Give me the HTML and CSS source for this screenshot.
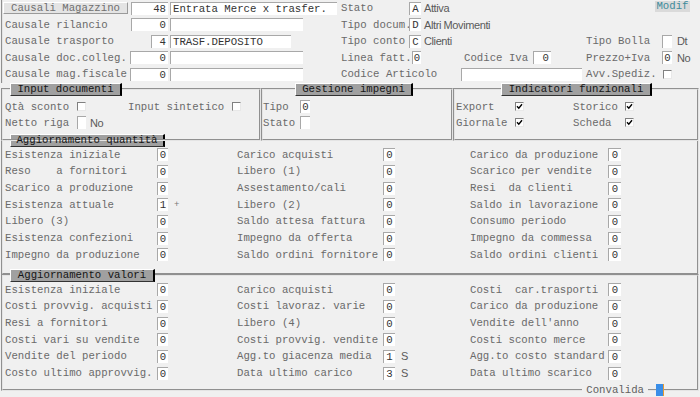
FILE: index.html
```html
<!DOCTYPE html>
<html lang="it">
<head>
    <meta charset="UTF-8">
    <title>Causali Magazzino</title>
    <link rel="stylesheet" href="styles.css">
</head>
<body>
<div class="window">
    <!-- Testata causale -->
    <div class="head">
        <div class="row">
            <span class="btn-light w125">Causali Magazzino</span>
            <span class="fld num ml3 w37">48</span>
            <span class="fld ml2 w167">Entrata Merce x trasfer.</span>
            <span class="lbl ml4 w68">Stato</span>
            <span class="fld sm w12">A</span>
            <span class="sans ml3">Attiva</span>
            <span class="modif">Modif</span>
        </div>
        <div class="row">
            <span class="lbl ml2 w126">Causale rilancio</span>
            <span class="fld num w37">0</span>
            <span class="fld ml2 w133"></span>
            <span class="lbl ml38 w68">Tipo docum.</span>
            <span class="fld sm w12">D</span>
            <span class="sans ml3">Altri Movimenti</span>
        </div>
        <div class="row">
            <span class="lbl ml2 w146">Causale trasporto</span>
            <span class="fld num w17">4</span>
            <span class="fld ml2 w121">TRASF.DEPOSITO</span>
            <span class="lbl ml50 w68">Tipo conto</span>
            <span class="fld sm w12">C</span>
            <span class="sans ml3 w162">Clienti</span>
            <span class="lbl w76">Tipo Bolla</span>
            <span class="fld sm w10"></span>
            <span class="sans ml5">Dt</span>
        </div>
        <div class="row">
            <span class="lbl ml2 w125">Causale doc.colleg.</span>
            <span class="fld num w38">0</span>
            <span class="fld ml2 w133"></span>
            <span class="lbl ml38 w71">Linea fatt.</span>
            <span class="fld sm w9">0</span>
            <span class="lbl ml43 w69">Codice Iva</span>
            <span class="fld num w18">0</span>
            <span class="lbl ml35 w76">Prezzo+Iva</span>
            <span class="fld sm w10">0</span>
            <span class="sans ml5">No</span>
        </div>
        <div class="row">
            <span class="lbl ml2 w125">Causale mag.fiscale</span>
            <span class="fld num w38">0</span>
            <span class="fld ml2 w133"></span>
            <span class="lbl ml38 w120">Codice Articolo</span>
            <span class="fld w121"></span>
            <span class="lbl ml4 w77">Avv.Spediz.</span>
            <span class="chk"></span>
        </div>
    </div>

    <!-- Gruppi -->
    <div class="groups">
        <fieldset class="group g1">
            <legend class="ml7"><span class="title w112">Input documenti</span></legend>
            <div class="grow">
                <span class="lbl ml2 w72">Qtà sconto</span>
                <span class="chk"></span>
                <span class="lbl ml42 w104">Input sintetico</span>
                <span class="chk"></span>
            </div>
            <div class="grow">
                <span class="lbl ml2 w72">Netto riga</span>
                <span class="fld sm w9"></span>
                <span class="sans ml4">No</span>
            </div>
        </fieldset>
        <fieldset class="group g2">
            <legend class="ml32"><span class="title w118">Gestione impegni</span></legend>
            <div class="grow">
                <span class="lbl w37">Tipo</span>
                <span class="fld sm w10">0</span>
            </div>
            <div class="grow">
                <span class="lbl w37">Stato</span>
                <span class="fld sm w10"></span>
            </div>
        </fieldset>
        <fieldset class="group g3">
            <legend class="ml46"><span class="title w151">Indicatori funzionali</span></legend>
            <div class="grow">
                <span class="lbl ml1 w59">Export</span>
                <span class="chk on"><svg viewBox="0 0 7 7"><path d="M1 3.2 L2.8 5.2 L6 1.2"/></svg></span>
                <span class="lbl ml49 w52">Storico</span>
                <span class="chk on"><svg viewBox="0 0 7 7"><path d="M1 3.2 L2.8 5.2 L6 1.2"/></svg></span>
            </div>
            <div class="grow">
                <span class="lbl ml1 w59">Giornale</span>
                <span class="chk on"><svg viewBox="0 0 7 7"><path d="M1 3.2 L2.8 5.2 L6 1.2"/></svg></span>
                <span class="lbl ml49 w52">Scheda</span>
                <span class="chk on"><svg viewBox="0 0 7 7"><path d="M1 3.2 L2.8 5.2 L6 1.2"/></svg></span>
            </div>
        </fieldset>
    </div>

    <!-- Aggiornamento quantità -->
    <fieldset class="section qty">
        <legend class="ml7"><span class="title w155">Aggiornamento quantità</span></legend>
        <div class="grid">
            <span class="lbl">Esistenza iniziale</span><span class="fld">0</span><span></span>
            <span class="lbl">Carico acquisti</span><span class="fld">0</span><span></span>
            <span class="lbl">Carico da produzione</span><span class="fld">0</span>

            <span class="lbl">Reso    a fornitori</span><span class="fld">0</span><span></span>
            <span class="lbl">Libero (1)</span><span class="fld">0</span><span></span>
            <span class="lbl">Scarico per vendite</span><span class="fld">0</span>

            <span class="lbl">Scarico a produzione</span><span class="fld">0</span><span></span>
            <span class="lbl">Assestamento/cali</span><span class="fld">0</span><span></span>
            <span class="lbl">Resi  da clienti</span><span class="fld">0</span>

            <span class="lbl">Esistenza attuale</span><span class="fld">1</span><span class="extra plus">+</span>
            <span class="lbl">Libero (2)</span><span class="fld">0</span><span></span>
            <span class="lbl">Saldo in lavorazione</span><span class="fld">0</span>

            <span class="lbl">Libero (3)</span><span class="fld">0</span><span></span>
            <span class="lbl">Saldo attesa fattura</span><span class="fld">0</span><span></span>
            <span class="lbl">Consumo periodo</span><span class="fld">0</span>

            <span class="lbl">Esistenza confezioni</span><span class="fld">0</span><span></span>
            <span class="lbl">Impegno da offerta</span><span class="fld">0</span><span></span>
            <span class="lbl">Impegno da commessa</span><span class="fld">0</span>

            <span class="lbl">Impegno da produzione</span><span class="fld">0</span><span></span>
            <span class="lbl">Saldo ordini fornitore</span><span class="fld">0</span><span></span>
            <span class="lbl">Saldo ordini clienti</span><span class="fld">0</span>
        </div>
    </fieldset>

    <!-- Aggiornamento valori -->
    <fieldset class="section val">
        <legend class="ml7"><span class="title w145">Aggiornamento valori</span></legend>
        <div class="grid">
            <span class="lbl">Esistenza iniziale</span><span class="fld">0</span><span></span>
            <span class="lbl">Carico acquisti</span><span class="fld">0</span><span></span>
            <span class="lbl">Costi  car.trasporti</span><span class="fld">0</span>

            <span class="lbl">Costi provvig. acquisti</span><span class="fld">0</span><span></span>
            <span class="lbl">Costi lavoraz. varie</span><span class="fld">0</span><span></span>
            <span class="lbl">Carico da produzione</span><span class="fld">0</span>

            <span class="lbl">Resi a fornitori</span><span class="fld">0</span><span></span>
            <span class="lbl">Libero (4)</span><span class="fld">0</span><span></span>
            <span class="lbl">Vendite dell'anno</span><span class="fld">0</span>

            <span class="lbl">Costi vari su vendite</span><span class="fld">0</span><span></span>
            <span class="lbl">Costi provvig. vendite</span><span class="fld">0</span><span></span>
            <span class="lbl">Costi sconto merce</span><span class="fld">0</span>

            <span class="lbl">Vendite del periodo</span><span class="fld">0</span><span></span>
            <span class="lbl">Agg.to giacenza media</span><span class="fld">1</span><span class="extra sans">S</span>
            <span class="lbl">Agg.to costo standard</span><span class="fld">0</span>

            <span class="lbl">Costo ultimo approvvig.</span><span class="fld">0</span><span></span>
            <span class="lbl">Data ultimo carico</span><span class="fld">3</span><span class="extra sans">S</span>
            <span class="lbl">Data ultimo scarico</span><span class="fld">0</span>
        </div>
        <div class="foot">
            <span class="foot-label">Convalida</span>
            <span class="focus-box"></span>
        </div>
    </fieldset>
</div>
</body>
</html>
```

FILE: styles.css
```css
:root {
    --bg: #f0f0f0;
    --label: #6a6a6a;
    --value: #333333;
    --field-edge: #a8a8a8;
    --title-bg: #a0a0a0;
}

* {
    margin: 0;
    padding: 0;
    box-sizing: border-box;
}

body {
    background: var(--bg);
    font-family: "Liberation Mono", "Courier New", monospace;
    font-size: 10.7px;
    color: var(--label);
}

.window {
    width: 700px;
    height: 397px;
    overflow: hidden;
}

/* Testata */
.head {
    margin-left: 1px;
    border-left: 2px groove #e4e4e4;
}

.row {
    display: flex;
    align-items: center;
    height: 16.5px;
}

.lbl {
    flex: none;
    white-space: pre;
    color: var(--label);
}

.sans {
    flex: none;
    font-family: "Liberation Sans", Arial, sans-serif;
    font-size: 11px;
    letter-spacing: -0.4px;
    color: #5a5a5a;
}

.fld {
    flex: none;
    display: block;
    height: 13px;
    line-height: 12px;
    padding: 0 2px;
    background: #fff;
    border-top: 1px solid var(--field-edge);
    border-left: 1px solid var(--field-edge);
    color: var(--value);
    white-space: pre;
    overflow: hidden;
}

.fld.num {
    text-align: right;
}

.fld.sm {
    padding: 0;
    text-align: center;
}

.chk {
    flex: none;
    display: block;
    width: 9px;
    height: 9px;
    background: #fff;
    border-top: 1px solid #808080;
    border-left: 1px solid #808080;
    border-right: 1px solid #e8e8e8;
    border-bottom: 1px solid #e8e8e8;
}

.chk svg {
    display: block;
    width: 7px;
    height: 7px;
    fill: none;
    stroke: #000;
    stroke-width: 1.4;
}

.btn-light {
    flex: none;
    display: block;
    height: 12px;
    line-height: 10px;
    text-align: center;
    background: #e4e4e4;
    border-top: 1px solid #fff;
    border-left: 1px solid #fff;
    border-right: 1px solid #9a9a9a;
    border-bottom: 1px solid #9a9a9a;
    color: #707070;
}

.modif {
    flex: none;
    margin-left: auto;
    margin-right: 10px;
    width: 35px;
    height: 11px;
    line-height: 11px;
    text-align: center;
    background: #dadada;
    color: #3f8c9c;
    align-self: flex-start;
    margin-top: 1px;
}

/* Riquadri */
fieldset {
    border: 2px groove #e4e4e4;
    min-inline-size: 0;
}

legend {
    padding: 0;
    text-align: left;
}

.title {
    display: block;
    height: 13px;
    line-height: 11px;
    text-align: center;
    background: var(--title-bg);
    color: #151515;
    border-top: 1px solid #fff;
    border-left: 1px solid #fff;
    border-right: 2px solid #000;
    border-bottom: 1px solid #333;
    white-space: pre;
}

.groups {
    display: flex;
    margin-left: 1px;
}

.group {
    height: 58px;
    padding-top: 3px;
}

.g1 { width: 260px; }
.g2 { width: 192px; }
.g3 { width: 246px; }

.grow {
    display: flex;
    align-items: center;
    height: 16px;
}

.section {
    margin-left: 1px;
    width: 698px;
}

.qty {
    margin-top: -7px;
    height: 141px;
}

.val {
    margin-top: -6px;
    height: 122px;
}

.grid {
    display: grid;
    grid-template-columns: 152px 11px 69px 146px 12px 75px 138px 13px;
    grid-auto-rows: 16.67px;
    align-items: center;
    padding-left: 2px;
}

.grid .fld {
    padding: 0;
    text-align: center;
}

.extra {
    padding-left: 6px;
}

.plus {
    font-size: 9px;
    color: #777;
}

.foot {
    display: flex;
    align-items: center;
    justify-content: flex-end;
    height: 14px;
    margin-top: 2px;
    margin-right: 33px;
}

.foot-label {
    background: var(--bg);
    padding: 0 4px;
    color: #606060;
}

.focus-box {
    width: 8px;
    height: 12px;
    margin-left: 8px;
    background: #3a8ee8;
    border-right: 1px solid #e89a30;
}

/* spaziature */
.ml1 { margin-left: 1px; }
.ml2 { margin-left: 2px; }
.ml3 { margin-left: 3px; }
.ml4 { margin-left: 4px; }
.ml5 { margin-left: 5px; }
.ml7 { margin-left: 7px; }
.ml32 { margin-left: 32px; }
.ml35 { margin-left: 35px; }
.ml38 { margin-left: 38px; }
.ml42 { margin-left: 42px; }
.ml43 { margin-left: 43px; }
.ml46 { margin-left: 46px; }
.ml49 { margin-left: 49px; }
.ml50 { margin-left: 50px; }

.w9 { width: 9px; }
.w10 { width: 10px; }
.w12 { width: 12px; }
.w17 { width: 17px; }
.w18 { width: 18px; }
.w37 { width: 37px; }
.w38 { width: 38px; }
.w52 { width: 52px; }
.w59 { width: 59px; }
.w68 { width: 68px; }
.w69 { width: 69px; }
.w71 { width: 71px; }
.w72 { width: 72px; }
.w76 { width: 76px; }
.w77 { width: 77px; }
.w104 { width: 104px; }
.w112 { width: 112px; }
.w118 { width: 118px; }
.w120 { width: 120px; }
.w121 { width: 121px; }
.w125 { width: 125px; }
.w126 { width: 126px; }
.w133 { width: 133px; }
.w145 { width: 145px; }
.w146 { width: 146px; }
.w151 { width: 151px; }
.w155 { width: 155px; }
.w162 { width: 162px; }
.w167 { width: 167px; }
```
